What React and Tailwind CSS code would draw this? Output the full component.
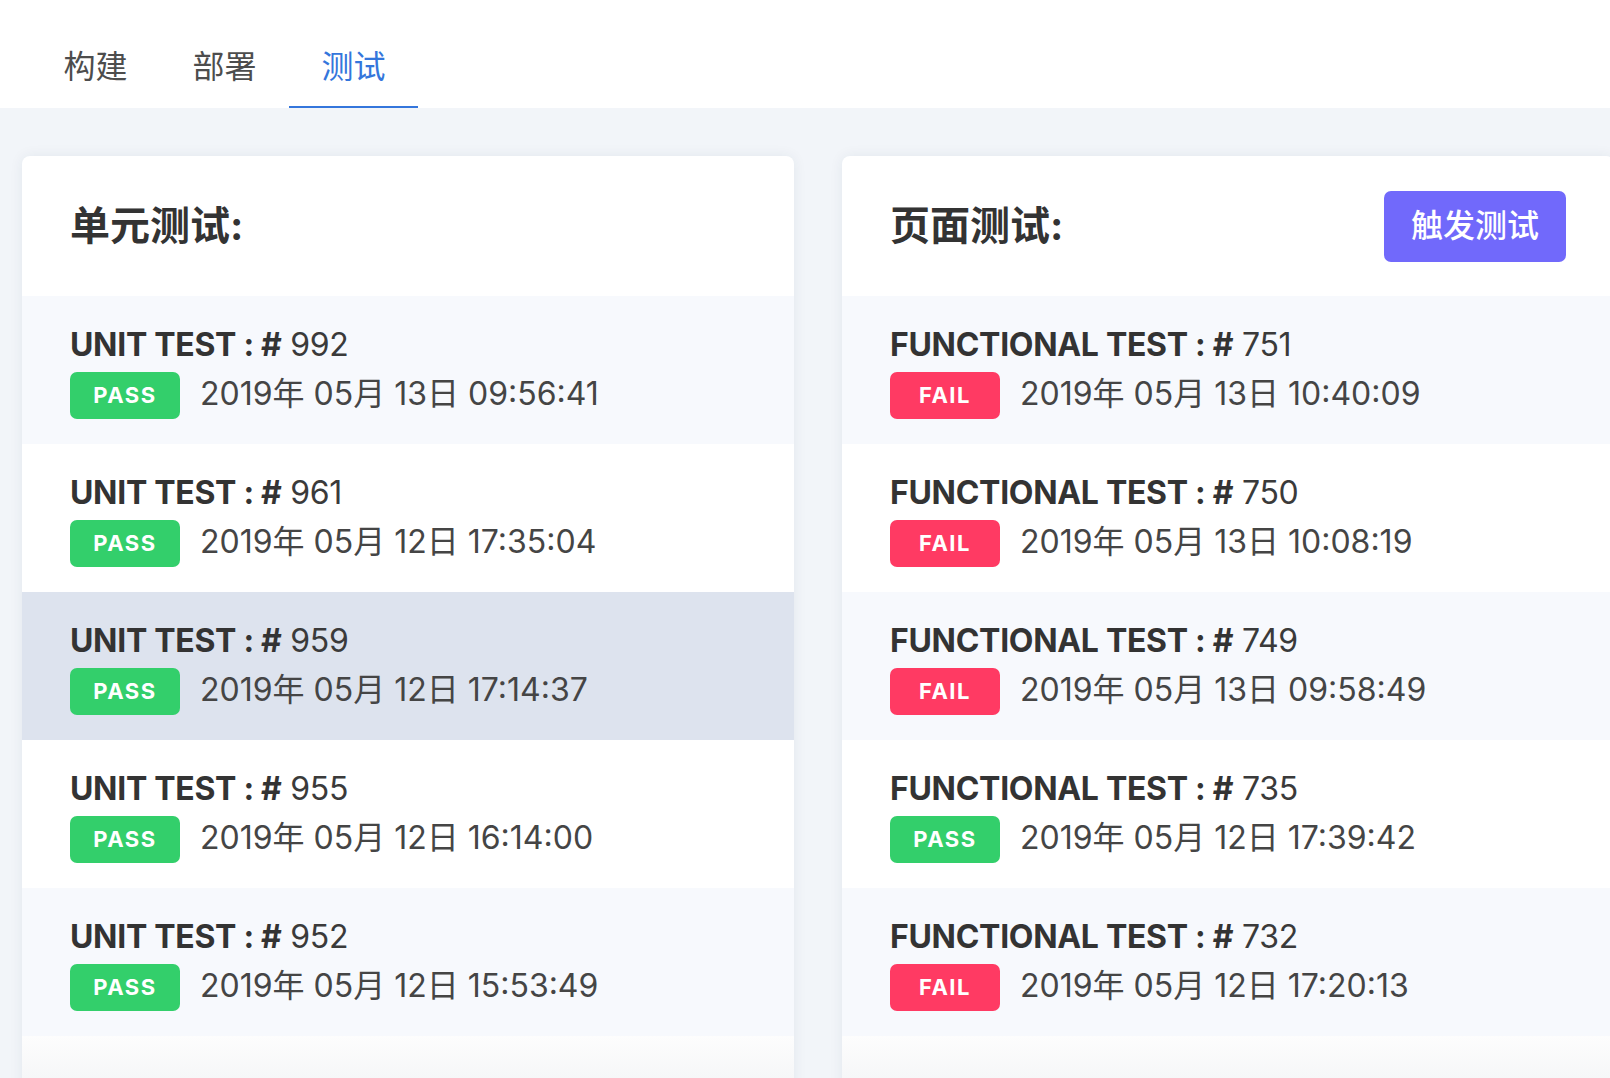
import React from "react";

const unit = [
  { n: "992", s: "PASS", d: "2019年 05月 13日 09:56:41", bg: "bg-[#f7f9fd]" },
  { n: "961", s: "PASS", d: "2019年 05月 12日 17:35:04", bg: "bg-white" },
  { n: "959", s: "PASS", d: "2019年 05月 12日 17:14:37", bg: "bg-[#dde3ee]" },
  { n: "955", s: "PASS", d: "2019年 05月 12日 16:14:00", bg: "bg-white" },
  { n: "952", s: "PASS", d: "2019年 05月 12日 15:53:49", bg: "bg-[#f7f9fd]" },
];

const func = [
  { n: "751", s: "FAIL", d: "2019年 05月 13日 10:40:09", bg: "bg-[#f7f9fd]" },
  { n: "750", s: "FAIL", d: "2019年 05月 13日 10:08:19", bg: "bg-white" },
  { n: "749", s: "FAIL", d: "2019年 05月 13日 09:58:49", bg: "bg-[#f7f9fd]" },
  { n: "735", s: "PASS", d: "2019年 05月 12日 17:39:42", bg: "bg-white" },
  { n: "732", s: "FAIL", d: "2019年 05月 12日 17:20:13", bg: "bg-[#f7f9fd]" },
];

function Row({ label, item }) {
  const pass = item.s === "PASS";
  return (
    <div className={`${item.bg} h-[148px] pl-[48px] pt-[29px]`}>
      <div className="h-[40px] leading-[40px] text-[32px] text-[#333333] whitespace-nowrap tracking-[-0.3px]">
        <span className="font-bold">{label} : #</span>
        <span className="font-normal text-[#3a3a3a]"> {item.n}</span>
      </div>
      <div className="mt-[7px] flex items-center h-[47px]">
        <div
          className={`${pass ? "bg-[#33cf6b]" : "bg-[#ff3a63]"} w-[110px] h-[47px] rounded-[7px] flex items-center justify-center text-white font-bold text-[22px] tracking-[1.5px]`}
        >
          {item.s}
        </div>
        <div className="ml-[20px] pb-[4px] text-[32px] text-[#454545] whitespace-nowrap leading-[43px]">
          {item.d}
        </div>
      </div>
    </div>
  );
}

function Card({ title, label, items, button }) {
  return (
    <div className="w-[772px] shrink-0 bg-white rounded-t-[8px] shadow-[0_0_14px_rgba(30,50,90,0.07)] overflow-hidden">
      <div className="h-[140px] flex items-center justify-between pl-[48px] pr-[48px]">
        <div className="text-[40px] font-bold text-[#333333] leading-none">{title}</div>
        {button && (
          <button className="w-[182px] h-[71px] rounded-[7px] bg-[#7169fb] text-white text-[32px] font-medium">
            触发测试
          </button>
        )}
      </div>
      {items.map((it) => (
        <Row key={it.n} label={label} item={it} />
      ))}
      <div className="h-[60px] bg-gradient-to-b from-[#fdfdfd] to-[#f3f4f6]" />
    </div>
  );
}

export default function App() {
  return (
    <div className="w-[1610px] h-[1078px] overflow-hidden bg-[#f2f5f9] font-['Inter','Noto_Sans_CJK_SC',sans-serif]">
      <div className="h-[108px] bg-white flex pl-[31px]">
        {["构建", "部署", "测试"].map((t, i) => (
          <div
            key={t}
            className={`w-[129px] flex justify-center pt-[45px] text-[32px] leading-[44px] ${
              i === 2 ? "text-[#3476dc] border-b-2 border-[#3476dc]" : "text-[#4d4d4d] border-b-2 border-transparent"
            }`}
          >
            {t}
          </div>
        ))}
      </div>
      <div className="flex gap-[48px] pl-[22px] pt-[48px]">
        <Card title="单元测试:" label="UNIT TEST" items={unit} />
        <Card title="页面测试:" label="FUNCTIONAL TEST" items={func} button />
      </div>
    </div>
  );
}
